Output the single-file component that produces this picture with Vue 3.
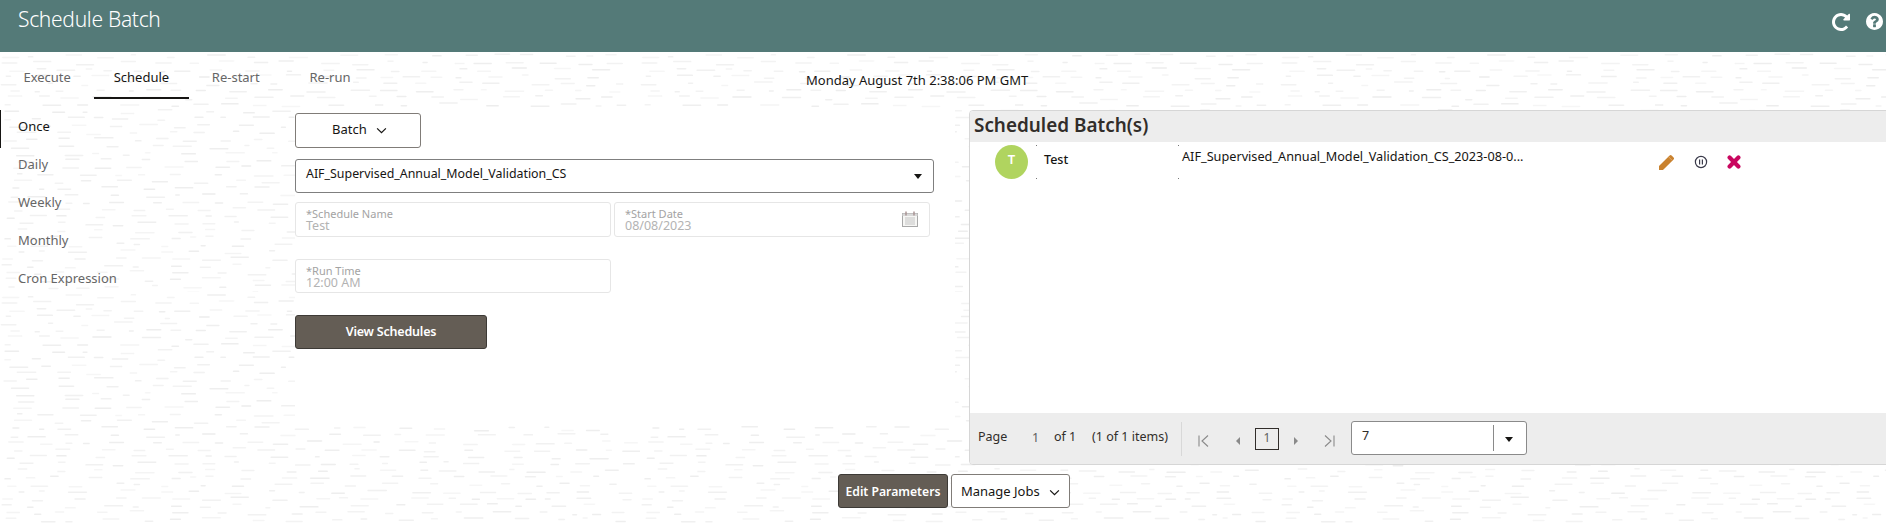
<script setup>
import { computed } from 'vue'

const tabs = [
  { label: 'Execute' },
  { label: 'Schedule', active: true },
  { label: 'Re-start' },
  { label: 'Re-run' }
]
const navItems = [
  { label: 'Once', active: true },
  { label: 'Daily' },
  { label: 'Weekly' },
  { label: 'Monthly' },
  { label: 'Cron Expression' }
]

const dashes = computed(() => {
  let seed = 12345
  const rnd = () => {
    seed = (seed * 16807) % 2147483647
    return seed / 2147483647
  }
  const list = []
  for (let y = 1; y < 240; y += 7) {
    let x = rnd() * 20
    while (x < 625) {
      const w = 5 + rnd() * 15
      list.push({
        x: x.toFixed(1),
        y: (y + rnd() * 4).toFixed(1),
        w: w.toFixed(1),
        o: (0.5 + rnd() * 0.5).toFixed(2)
      })
      x += w + 8 + rnd() * 26
    }
  }
  return list
})
</script>

<template>
  <div class="page">
    <svg class="texture" width="1886" height="471" aria-hidden="true">
      <defs>
        <pattern id="dash-tile" width="640" height="240" patternUnits="userSpaceOnUse">
          <rect
            v-for="(d, i) in dashes"
            :key="i"
            :x="d.x"
            :y="d.y"
            :width="d.w"
            height="1.5"
            rx="0.7"
            fill="#ededed"
            :opacity="d.o"
          />
        </pattern>
      </defs>
      <rect width="1886" height="471" fill="url(#dash-tile)" />
    </svg>

    <header class="topbar">
      <h1 class="title">Schedule Batch</h1>
      <div class="top-icons">
        <svg class="ico-refresh" viewBox="128 128 1536 1536" width="18" height="18">
          <path fill="#fff" d="M1664 256v448q0 26-19 45t-45 19h-448q-42 0-59-40-17-39 14-69l138-138q-148-137-349-137-104 0-198.5 40.5t-163.5 109.5-109.5 163.5-40.5 198.5 40.5 198.5 109.5 163.5 163.5 109.5 198.5 40.5q119 0 225-52t179-147q7-10 23-12 15 0 25 9l137 138q9 8 9.5 20.5t-7.5 22.5q-109 132-264 204.5t-327 72.5q-156 0-298-61t-245-164-164-245-61-298 61-298 164-245 245-164 298-61q147 0 284.5 55.5t244.5 156.5l130-129q29-31 70-14 39 17 39 59z" />
        </svg>
        <svg viewBox="128 128 1536 1536" width="17" height="17">
          <path fill="#fff" d="M1024 1376v-192q0-14-9-23t-23-9h-192q-14 0-23 9t-9 23v192q0 14 9 23t23 9h192q14 0 23-9t9-23zm256-672q0-88-55.5-163t-138.5-116-170-41q-243 0-371 213-15 24 8 42l132 100q7 6 19 6 16 0 25-12 53-68 86-92 34-24 86-24 48 0 85.5 26t37.5 59q0 38-20 61t-68 45q-63 28-115.5 86.5t-52.5 125.5v36q0 14 9 23t23 9h192q14 0 23-9t9-23q0-19 21.5-49.5t54.5-49.5q32-18 49-28.5t46-35 44.5-48 28-60.5 12.5-81zm384 192q0 209-103 385.5t-279.5 279.5-385.5 103-385.5-103-279.5-279.5-103-385.5 103-385.5 279.5-279.5 385.5-103 385.5 103 279.5 279.5 103 385.5z" />
        </svg>
      </div>
    </header>

    <div class="tabbar">
      <nav class="tabs">
        <a v-for="t in tabs" :key="t.label" class="tab" :class="{ active: t.active }">{{ t.label }}</a>
      </nav>
      <div class="clock">Monday August 7th 2:38:06 PM GMT</div>
    </div>

    <main class="body">
      <aside class="side">
        <a v-for="n in navItems" :key="n.label" class="side-item" :class="{ active: n.active }">{{ n.label }}</a>
      </aside>

      <section class="form">
        <button class="btn-outline batch">
          Batch
          <svg class="chev" viewBox="0 0 12 8" width="11" height="7"><path d="M1 1.5 6 6.5 11 1.5" /></svg>
        </button>
        <div class="select">
          <span>AIF_Supervised_Annual_Model_Validation_CS</span>
          <i class="caret"></i>
        </div>
        <div class="field-row">
          <div class="field">
            <label>*Schedule Name</label>
            <span>Test</span>
          </div>
          <div class="field">
            <label>*Start Date</label>
            <span>08/08/2023</span>
            <svg class="cal" viewBox="0 0 16 16" width="16" height="16">
              <rect x="0.5" y="2.5" width="15" height="13" fill="#f6f6f4" stroke="#a8a8a8" />
              <rect x="0.5" y="2.5" width="15" height="2.5" fill="#d9d9d9" />
              <path d="M4 0.5v4M12 0.5v4" stroke="#a68f8f" stroke-width="1.4" />
              <path d="M3 7h10M3 9h10M3 11h10M3 13h10" stroke="#c4c4c4" />
            </svg>
          </div>
        </div>
        <div class="field run">
          <label>*Run Time</label>
          <span>12:00 AM</span>
        </div>
        <button class="btn-dark view">View Schedules</button>
      </section>

      <section class="panel">
        <h2 class="panel-head">Scheduled Batch(s)</h2>
        <div class="list">
          <div class="row">
            <div class="avatar">T</div>
            <div class="cell name">Test</div>
            <div class="cell file">AIF_Supervised_Annual_Model_Validation_CS_2023-08-0...</div>
            <div class="actions">
              <svg viewBox="0 0 16 16" width="16" height="16">
                <path fill="#c9822f" d="M0 16v-4L10.6 1.4a1.4 1.4 0 0 1 2 0l2 2a1.4 1.4 0 0 1 0 2L4 16z" />
                <path d="M9.6 2.8l3.6 3.6" stroke="#e3ad6d" stroke-width="0.9" />
              </svg>
              <svg viewBox="0 0 14 14" width="14" height="14">
                <circle cx="7" cy="7" r="5.6" fill="none" stroke="#3a3a4a" stroke-width="1.2" />
                <path d="M5.6 4.6v4.8M8.4 4.6v4.8" stroke="#3a3a4a" stroke-width="1.2" />
              </svg>
              <svg viewBox="0 0 14 14" width="14" height="14">
                <path d="M2.6 2.6l8.8 8.8M11.4 2.6l-8.8 8.8" stroke="#c9075f" stroke-width="4.2" stroke-linecap="round" />
              </svg>
            </div>
          </div>
        </div>
        <footer class="pager">
          <span class="pg-page">Page</span>
          <span class="pg-num">1</span>
          <span class="pg-of">of 1</span>
          <span class="pg-items">(1 of 1 items)</span>
          <i class="pg-sep"></i>
          <svg class="pg-first" viewBox="0 0 11 12" width="11" height="12"><path d="M1 .5v11M10 .5 4 6l6 5.5" /></svg>
          <i class="tri left"></i>
          <span class="pg-box">1</span>
          <i class="tri right"></i>
          <svg class="pg-last" viewBox="0 0 11 12" width="11" height="12"><path d="M10 .5v11M1 .5 7 6l-6 5.5" /></svg>
          <div class="pg-select">
            <span class="pg-val">7</span>
            <i class="pg-div"></i>
            <i class="caret"></i>
          </div>
        </footer>
      </section>
    </main>

    <div class="actions-bar">
      <button class="btn-dark edit">Edit Parameters</button>
      <button class="btn-outline manage">
        Manage Jobs
        <svg class="chev" viewBox="0 0 12 8" width="11" height="7"><path d="M1 1.5 6 6.5 11 1.5" /></svg>
      </button>
    </div>
  </div>
</template>

<style>
html, body { margin: 0; overflow: hidden; background: #fff; }
</style>

<style scoped>
.page {
  position: relative;
  width: 1886px;
  height: 523px;
  overflow: hidden;
  font-family: "Noto Sans", "Open Sans", sans-serif;
  font-size: 13px;
  color: #161513;
}
.texture { position: absolute; left: 0; top: 52px; }

.topbar {
  position: relative;
  height: 52px;
  background: #547a78;
  display: flex;
  justify-content: space-between;
  color: #fff;
}
.title {
  margin: 0;
  padding: 3px 0 0 18px;
  font-size: 21px;
  line-height: 32px;
  font-weight: 300;
  font-family: "Noto Sans", sans-serif;
  letter-spacing: -0.3px;
}
.top-icons {
  display: flex;
  gap: 16px;
  padding: 13px 3px 0 0;
  align-items: flex-start;
}

.tabbar { position: relative; display: flex; height: 48px; }
.tabs { display: flex; width: 806px; flex: none; }
.tab {
  width: 94.3px;
  height: 47px;
  line-height: 50px;
  text-align: center;
  color: #666;
  box-sizing: border-box;
}
.tab.active { color: #161513; border-bottom: 2px solid #161513; }
.clock { padding-top: 18px; line-height: 21px; color: #161513; }

.body { position: relative; display: flex; align-items: flex-start; }
.side { width: 295px; flex: none; padding-top: 10px; display: flex; flex-direction: column; }
.side-item {
  height: 38px;
  line-height: 33px;
  padding-left: 18px;
  color: #666;
}
.side-item.active { color: #161513; border-left: 1px solid #161513; padding-left: 17px; }

.form {
  width: 660px;
  flex: none;
  height: 317px;
  margin-top: 8px;
  padding-top: 5px;
  box-sizing: border-box;
  background: #fff;
  display: flex;
  flex-direction: column;
  align-items: flex-start;
}
button { font-family: inherit; font-size: 13px; cursor: pointer; box-sizing: border-box; }
.btn-outline {
  background: #fff;
  color: #161513;
  border: 1px solid #807c78;
  border-radius: 3px;
}
.btn-dark {
  background: #645d55;
  color: #fff;
  font-weight: 600;
  border: 1px solid #3d3a36;
  border-radius: 3px;
  padding: 0;
}
.chev { fill: none; stroke: #161513; stroke-width: 1.4; margin-left: 6px; vertical-align: 0; }
.batch { width: 126px; height: 35px; padding: 0 0 3px 3px; }
.select {
  margin-top: 11px;
  width: 639px;
  height: 34px;
  box-sizing: border-box;
  border: 1px solid #7f7f7f;
  border-radius: 3px;
  padding: 0 10px;
  display: flex;
  align-items: center;
  justify-content: space-between;
  background: #fff;
  line-height: 26px;
  font-size: 12.4px;
}
.select span { padding-bottom: 4px; }
.caret {
  width: 0;
  height: 0;
  border-left: 4.5px solid transparent;
  border-right: 4.5px solid transparent;
  border-top: 5px solid #161513;
}
.select .caret { margin-right: 1px; }
.field-row { margin-top: 9px; display: flex; gap: 3px; }
.field {
  position: relative;
  width: 316px;
  height: 35px;
  box-sizing: border-box;
  border: 1px solid #e6e6e6;
  border-radius: 3px;
  padding: 5px 10px 0;
  background: #fff;
  display: flex;
  flex-direction: column;
}
.field label { font-size: 11px; line-height: 12px; color: #a3a3a3; }
.field span { font-size: 12.5px; line-height: 12px; color: #b3b3b3; }
.cal { position: absolute; right: 11px; top: 8px; }
.run { margin-top: 22px; height: 34px; }
.view { margin-top: 22px; width: 192px; height: 34px; font-size: 12.5px; letter-spacing: -0.2px; padding-bottom: 2px; }

.panel {
  margin-top: 10px;
  margin-left: 14px;
  width: 960px;
  flex: none;
  height: 355px;
  box-sizing: border-box;
  border: 1px solid #d6d6d6;
  border-radius: 4px 0 0 4px;
  background: #fff;
  display: flex;
  flex-direction: column;
  overflow: hidden;
}
.panel-head {
  margin: 0;
  height: 31px;
  flex: none;
  background: #ededed;
  padding-left: 4px;
  font-size: 18.9px;
  line-height: 28px;
  font-weight: 600;
  color: #312d2a;
}
.list { flex: 1; }
.row { position: relative; display: flex; align-items: flex-start; padding: 3px 0 0 25px; }
.avatar {
  width: 33px;
  height: 34px;
  border-radius: 50%;
  background: #b0d45f;
  color: #fff;
  font-weight: 600;
  font-size: 13px;
  line-height: 28px;
  text-align: center;
}
.cell {
  height: 34px;
  box-sizing: border-box;
  background:
    linear-gradient(#777, #777) 0 0 / 1px 1px no-repeat,
    linear-gradient(#777, #777) 0 100% / 1px 1px no-repeat;
}
.name { margin-left: 8px; width: 142px; padding-left: 8px; font-weight: 500; line-height: 29px; font-size: 12.5px; }
.file { width: 345px; padding-left: 4px; line-height: 22px; font-size: 12.7px; white-space: nowrap; }
.actions {
  position: absolute;
  left: 689px;
  top: 12px;
  display: flex;
  align-items: center;
  gap: 19px;
}
.pager {
  flex: none;
  height: 51px;
  background: #ededed;
  display: flex;
  align-items: center;
  position: relative;
  font-size: 12.5px;
  color: #312d2a;
  padding-left: 8px;
}
.pg-page { width: 54px; padding-bottom: 4px; }
.pg-num { width: 22px; color: #5e5e5e; padding-bottom: 2px; }
.pg-of { width: 38px; padding-bottom: 4px; }
.pg-items { width: 89px; padding-bottom: 4px; }
.pg-sep { width: 1px; height: 34px; background: #d8d8d8; }
.pg-first, .pg-last { fill: none; stroke: #8a8a8a; stroke-width: 1.1; }
.pg-first { margin-left: 16px; margin-top: 5px; }
.tri { width: 0; height: 0; border-top: 4px solid transparent; border-bottom: 4px solid transparent; margin-top: 5px; }
.tri.left { border-right: 4px solid #8a8a8a; margin-left: 27px; }
.tri.right { border-left: 4px solid #8a8a8a; margin-left: 15px; }
.pg-box {
  margin-left: 15px;
  width: 24px;
  height: 22px;
  box-sizing: border-box;
  border: 1px solid #312d2a;
  text-align: center;
  line-height: 18px;
  color: #5e5e5e;
  font-size: 12px;
}
.pg-last { margin-left: 26px; margin-top: 5px; }
.pg-select {
  margin-left: 16px;
  width: 176px;
  height: 34px;
  box-sizing: border-box;
  background: #fff;
  border: 1px solid #8a8a8a;
  border-radius: 3px;
  position: relative;
  display: flex;
  align-items: center;
  margin-top: -2px;
}
.pg-val { margin-left: 10px; padding-bottom: 5px; color: #312d2a; }
.pg-div { position: absolute; left: 141px; top: 3px; height: 26px; width: 1px; background: #8a8a8a; }
.pg-select .caret { position: absolute; left: 153px; top: 15px; }

.actions-bar {
  position: relative;
  display: flex;
  gap: 3px;
  padding: 9px 0 0 838px;
}
.edit { width: 110px; height: 34px; font-size: 12.2px; }
.manage { width: 119px; height: 34px; padding: 0 0 1px; }
</style>
